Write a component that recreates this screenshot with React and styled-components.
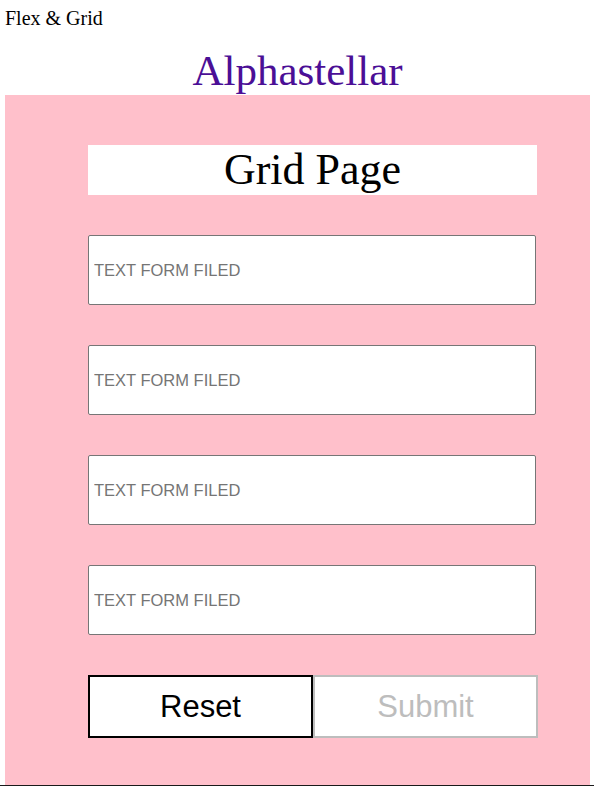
import React from 'react';
import styled, { createGlobalStyle } from 'styled-components';

const GlobalStyle = createGlobalStyle`
  html, body {
    margin: 0;
    padding: 0;
    background: #ffffff;
  }
  body {
    font-family: "Liberation Serif", "Times New Roman", serif;
  }
`;

const Page = styled.div`
  padding: 7px 4px 0 5px;
`;

const TopLabel = styled.div`
  font-size: 20px;
  color: #000;
`;

const Brand = styled.h1`
  margin: 16px 0 0;
  font-size: 43px;
  font-weight: 400;
  text-align: center;
  color: #4b0f96;
`;

const Panel = styled.main`
  background: #ffc0cb;
  padding: 50px 53px 50px 83px;
`;

const Form = styled.form`
  display: flex;
  flex-direction: column;
  gap: 40px;
  width: 449px;
`;

const Heading = styled.h2`
  margin: 0;
  height: 50px;
  background: #fff;
  font-size: 44px;
  font-weight: 400;
  line-height: 50px;
  text-align: center;
  color: #000;
`;

const Field = styled.input`
  box-sizing: border-box;
  width: 448px;
  height: 70px;
  margin: 0;
  padding: 0 5px;
  border: 1px solid #767676;
  border-radius: 2px;
  background: #fff;
  font-family: "Liberation Sans", Arial, sans-serif;
  font-size: 16.5px;

  &::placeholder {
    color: #757575;
  }
`;

const Actions = styled.div`
  display: grid;
  grid-template-columns: 225px 225px;
`;

const Button = styled.button`
  box-sizing: border-box;
  height: 63px;
  margin: 0;
  background: #fff;
  border: 2px solid ${(p) => (p.$muted ? '#bdbdbd' : '#000')};
  color: ${(p) => (p.$muted ? '#bdbdbd' : '#000')};
  font-family: "Liberation Sans", Arial, sans-serif;
  font-size: 31px;
  cursor: pointer;
`;

const BottomEdge = styled.div`
  position: fixed;
  left: 0;
  right: 0;
  bottom: 0;
  height: 1px;
  background: #1a1a1a;
`;

const fields = [1, 2, 3, 4];

const App = () => {
  return (
    <>
      <GlobalStyle />
      <Page>
        <TopLabel>Flex &amp; Grid</TopLabel>
        <Brand>Alphastellar</Brand>
        <Panel>
          <Form onSubmit={(e) => e.preventDefault()}>
            <Heading>Grid Page</Heading>
            {fields.map((n) => (
              <Field key={n} type="text" placeholder="TEXT FORM FILED" />
            ))}
            <Actions>
              <Button type="reset">Reset</Button>
              <Button type="submit" $muted>
                Submit
              </Button>
            </Actions>
          </Form>
        </Panel>
      </Page>
      <BottomEdge />
    </>
  );
};

export default App;
